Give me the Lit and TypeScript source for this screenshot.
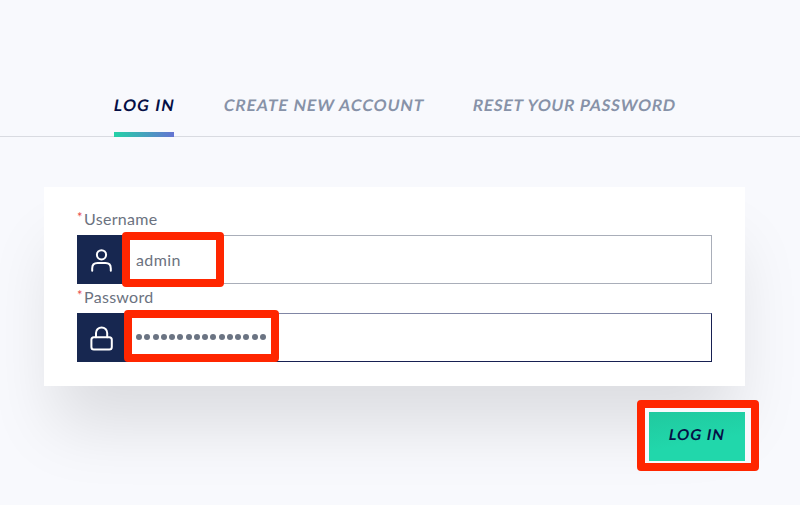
import { LitElement, html, css, svg } from "lit";
import { customElement } from "lit/decorators.js";
import { classMap } from "lit/directives/class-map.js";

const userIcon = svg`<circle cx="12.5" cy="6.8" r="4.6"/><path d="M3.2 22.8V20.4Q3.2 15 8.6 15H16.4Q21.8 15 21.8 20.4V22.8"/>`;
const lockIcon = svg`<rect x="2.4" y="11.2" width="20.4" height="12.4" rx="2.5"/><path d="M7 11.2V7a5.6 5.6 0 0 1 11.2 0V11.2"/>`;

@customElement("app-root")
export class AppRoot extends LitElement {
  static styles = css`
    :host {
      display: block;
      box-sizing: border-box;
      height: 505px;
      overflow: hidden;
      background: #f8f9fd;
      font-family: Lato, "Liberation Sans", sans-serif;
      color: #6b7280;
    }
    * { box-sizing: border-box; }
    .tabs {
      display: flex;
      height: 137px;
      padding: 90px 0 0 114px;
      gap: 50px;
      border-bottom: 1px solid #d9dbe1;
    }
    .tab {
      height: 47px;
      line-height: 30px;
      font-size: 16px;
      font-weight: 700;
      white-space: nowrap;
      color: #8792a8;
      border-bottom: 5px solid transparent;
    }
    .slant { display: inline-block; transform: skewX(-10deg); }
    .login { width: 60px; letter-spacing: 1.3px; }
    .create { width: 199px; letter-spacing: 1px; }
    .reset { width: 203px; letter-spacing: 0.78px; }
    .active {
      color: #050f45;
      border-image: linear-gradient(90deg, #22d3a6, #6672d3) 1;
      border-width: 0 0 5px;
    }
    .card {
      width: 701px;
      height: 199px;
      margin: 50px 0 0 44px;
      padding: 21px 33px 0;
      background: #fff;
      box-shadow: 0 50px 66px -10px rgba(0, 0, 0, 0.115);
    }
    .field { height: 78px; }
    .label {
      display: flex;
      height: 27px;
      line-height: 22px;
      font-size: 16px;
      letter-spacing: 0.3px;
    }
    .star { width: 7px; font-size: 13px; line-height: 19px; color: #e84b4b; }
    .box {
      display: flex;
      align-items: center;
      width: 635px;
      height: 49px;
      border: 1px solid #a9aeb9;
    }
    .box.focus { border-color: #172052; border-top-color: #8086a5; }
    .icon {
      display: flex;
      align-items: center;
      justify-content: center;
      width: 48px;
      height: 49px;
      margin: -1px 0 -1px -1px;
      padding-top: 2px;
      flex: none;
      background: #172750;
    }
    .icon svg {
      width: 25px;
      height: 26px;
      fill: none;
      stroke: #fff;
      stroke-width: 2;
      stroke-linecap: round;
      stroke-linejoin: round;
    }
    .mark {
      display: flex;
      align-items: center;
      flex: none;
      border: 8px solid #ff2600;
      border-radius: 4px;
    }
    .admin { width: 102px; height: 55px; margin-left: -3px; padding-left: 6px; font-size: 16px; letter-spacing: 0.4px; }
    .secret { width: 155px; height: 52px; margin: -3px 0 0 -1px; padding: 1px 0 0 4px; }
    .dots { display: flex; gap: 2.25px; }
    .dot { width: 6px; height: 6px; border-radius: 50%; background: #6b7483; }
    .submit { width: 122px; height: 71px; margin: 14px 0 0 637px; padding: 4px 5px 2px 4px; background: #f8f9fd; }
    .button {
      width: 96px;
      height: 49px;
      border: 0;
      background: linear-gradient(170deg, #20c99f, #21d7ab 60%);
      color: #050f45;
      font: 700 15px/18px Lato, sans-serif;
      letter-spacing: 1px;
      text-align: center;
      padding: 0 0 5px;
    }
  `;

  render() {
    const tabs = [
      ["login", "LOG IN"],
      ["create", "CREATE NEW ACCOUNT"],
      ["reset", "RESET YOUR PASSWORD"],
    ];
    return html`
      <nav class="tabs">
        ${tabs.map(([name, text]) => html`<div class=${classMap({ tab: true, [name]: true, active: name === "login" })}><span class="slant">${text}</span></div>`)}
      </nav>
      <section class="card">
        <div class="field">
          <div class="label"><span class="star">*</span>Username</div>
          <div class="box">
            <div class="icon"><svg viewBox="0 0 25 26">${userIcon}</svg></div>
            <div class="mark admin">admin</div>
          </div>
        </div>
        <div class="field">
          <div class="label"><span class="star">*</span>Password</div>
          <div class="box focus">
            <div class="icon"><svg viewBox="0 0 25 26">${lockIcon}</svg></div>
            <div class="mark secret"><div class="dots">${Array.from({ length: 16 }, () => html`<span class="dot"></span>`)}</div></div>
          </div>
        </div>
      </section>
      <div class="mark submit"><button class="button"><span class="slant">LOG IN</span></button></div>
    `;
  }
}
